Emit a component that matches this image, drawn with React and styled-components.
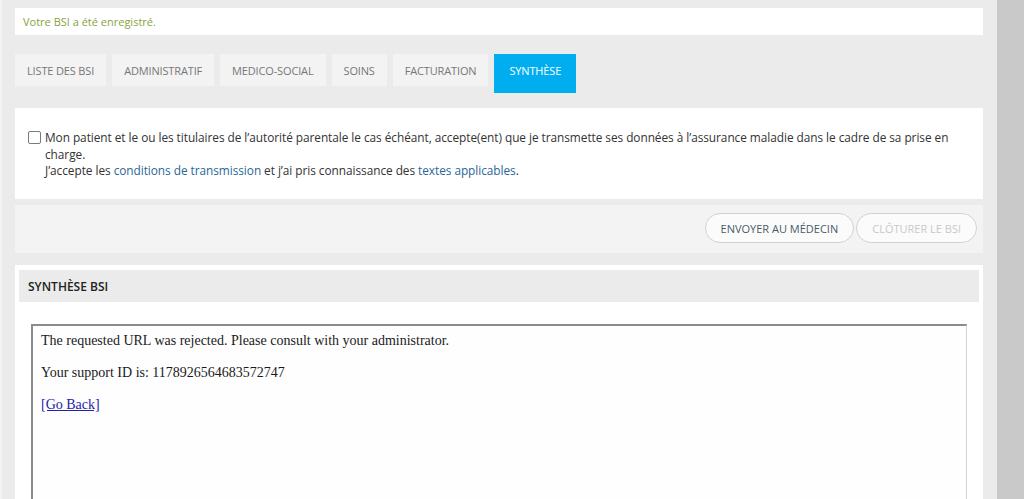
import React from "react";
import styled, { createGlobalStyle } from "styled-components";

const GlobalStyle = createGlobalStyle`
  html, body {
    margin: 0;
    padding: 0;
    height: 100%;
    overflow: hidden;
    background: #ebebeb;
    font-family: "Open Sans", "Liberation Sans", sans-serif;
  }
  *, *::before, *::after {
    box-sizing: border-box;
  }
`;

const Page = styled.div`
  display: flex;
  height: 499px;
  overflow: hidden;
`;

const Main = styled.div`
  flex: 1;
  padding: 8px 14px 0 13px;
  border-left: 2px solid #f2f2f2;
  display: flex;
  flex-direction: column;
  min-width: 0;
`;

const ScrollTrack = styled.div`
  width: 27px;
  background: #c9c9c9;
`;

const Alert = styled.div`
  height: 27px;
  background: #ffffff;
  display: flex;
  align-items: center;
  padding-left: 8px;
  font-size: 11px;
  color: #86a344;
`;

const Tabs = styled.div`
  display: flex;
  align-items: flex-start;
  gap: 6px;
  margin-top: 19px;
  height: 39px;
`;

const Tab = styled.div`
  height: ${p => (p.active ? "39px" : "32px")};
  padding: ${p => (p.active ? "0 15px 7px" : "0 12px")};
  display: flex;
  align-items: center;
  font-size: 11px;
  text-transform: uppercase;
  color: ${p => (p.active ? "#ffffff" : "#777777")};
  background: ${p => (p.active ? "#00aeef" : "#f3f3f3")};
  letter-spacing: -0.15px;
`;

const Consent = styled.div`
  margin-top: 15px;
  background: #ffffff;
  height: 91px;
  padding: 21px 26px 0 13px;
  display: flex;
  gap: 4px;
  font-size: 11.85px;
  line-height: 16.5px;
  color: #333333;
`;

const Check = styled.span`
  flex: none;
  width: 13px;
  height: 13px;
  margin-top: 2px;
  border: 1px solid #7a7a7a;
  border-radius: 2px;
  background: #ffffff;
`;

const ConsentText = styled.div`
  letter-spacing: -0.05px;
`;

const Link = styled.a`
  color: #2a6796;
  text-decoration: none;
`;

const Actions = styled.div`
  margin-top: 6px;
  height: 48px;
  background: #f3f3f3;
  display: flex;
  justify-content: flex-end;
  align-items: flex-start;
  gap: 2px;
  padding: 8px 6px 0 0;
`;

const PillButton = styled.button`
  height: 30px;
  padding: 0 15px;
  border: 1px solid #d2d2d2;
  border-radius: 15px;
  background: #fbfbfb;
  font-family: "Open Sans", "Liberation Sans", sans-serif;
  font-size: 11px;
  text-transform: uppercase;
  color: ${p => (p.disabled ? "#c9c9c9" : "#4a5b69")};
`;

const Panel = styled.section`
  margin-top: 12px;
  flex: 1;
  background: #ffffff;
  padding: 5px 4px 0 4px;
  display: flex;
  flex-direction: column;
`;

const PanelHeader = styled.h2`
  margin: 0;
  height: 32px;
  background: #ebebeb;
  display: flex;
  align-items: center;
  padding-left: 9px;
  font-size: 12px;
  font-weight: 600;
  color: #222222;
`;

const PanelBody = styled.div`
  flex: 1;
  padding: 22px 12px 0 12px;
  display: flex;
`;

const Frame = styled.div`
  flex: 1;
  border-top: 2px solid #8c8c8c;
  border-left: 2px solid #8c8c8c;
  border-right: 1px solid #d4d4d4;
  background: #fefefe;
  padding: 7px 8px 0 8px;
  font-family: "Liberation Serif", "Times New Roman", serif;
  font-size: 14px;
  line-height: 16px;
  color: #1a1a1a;
`;

const FrameText = styled.p`
  margin: 0 0 16px 0;
`;

const GoBack = styled.a`
  color: #2222aa;
  text-decoration: underline;
`;

const tabs = [
  "Liste des BSI",
  "Administratif",
  "Medico-social",
  "Soins",
  "Facturation",
  "Synthèse"
];

export default function App() {
  return (
    <Page>
      <GlobalStyle />
      <Main>
        <Alert>Votre BSI a été enregistré.</Alert>
        <Tabs>
          {tabs.map(t => (
            <Tab key={t} active={t === "Synthèse"}>
              {t}
            </Tab>
          ))}
        </Tabs>
        <Consent>
          <Check />
          <ConsentText>
            Mon patient et le ou les titulaires de l’autorité parentale le cas
            échéant, accepte(ent) que je transmette ses données à l’assurance
            maladie dans le cadre de sa prise en charge.
            <br />
            J’accepte les <Link href="#">conditions de transmission</Link> et
            j’ai pris connaissance des <Link href="#">textes applicables</Link>.
          </ConsentText>
        </Consent>
        <Actions>
          <PillButton>Envoyer au médecin</PillButton>
          <PillButton disabled>Clôturer le BSI</PillButton>
        </Actions>
        <Panel>
          <PanelHeader>SYNTHÈSE BSI</PanelHeader>
          <PanelBody>
            <Frame>
              <FrameText>
                The requested URL was rejected. Please consult with your
                administrator.
              </FrameText>
              <FrameText>Your support ID is: 1178926564683572747</FrameText>
              <FrameText>
                <GoBack href="#">[Go Back]</GoBack>
              </FrameText>
            </Frame>
          </PanelBody>
        </Panel>
      </Main>
      <ScrollTrack />
    </Page>
  );
}
